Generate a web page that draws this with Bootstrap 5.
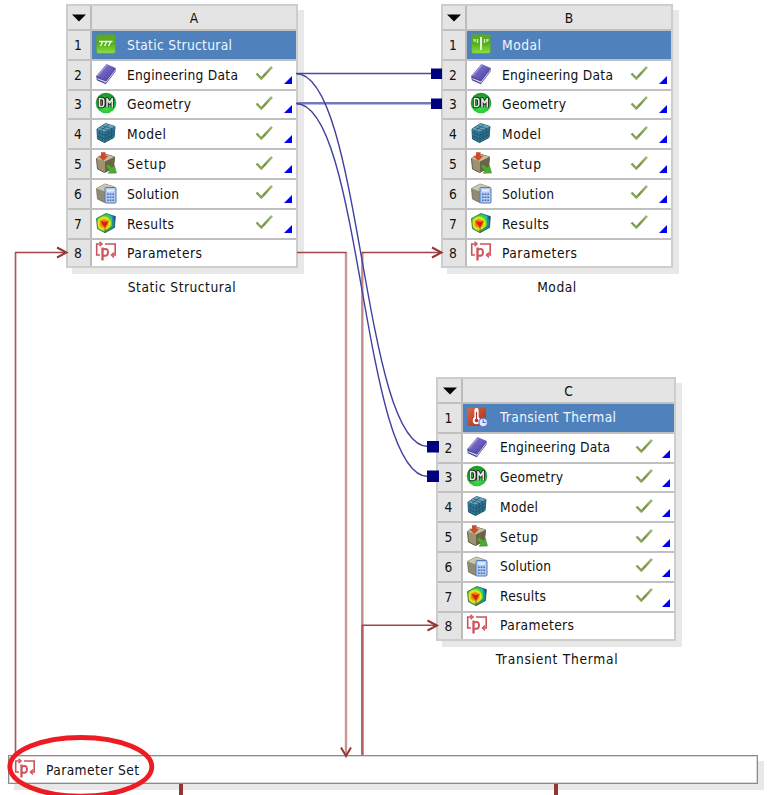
<!DOCTYPE html>
<html lang="en">
<head>
<meta charset="utf-8">
<meta name="viewport" content="width=device-width, initial-scale=1">
<title>Project Schematic</title>
<link href="https://cdn.jsdelivr.net/npm/bootstrap@5.3.0/dist/css/bootstrap.min.css" rel="stylesheet">
<style>
  body { font-family: "DejaVu Sans Condensed", "DejaVu Sans", sans-serif; font-stretch: condensed; font-size: 13.7px; line-height: 16px; color: #111; }
  .schematic { width: 767px; height: 795px; }
  .system { width: 232px; }
  .system-a { left: 66px; top: 4px; }
  .system-b { left: 441px; top: 4px; }
  .system-c { left: 436px; top: 377px; width: 240px; }
  .grid-box { border: 2px solid #cdcdcd; height: 264px; box-shadow: 6px 6px 0 #e8e8e8; background: #fff; }
  .line { height: 29.8px; border-top: 2px solid #c0c0c0; }
  .line.top { height: 23px; border-top: 0; background: #e4e4e4; }
  .line:last-child { height: 28.400px; }
  .num { width: 24px; background: #e4e4e4; border-right: 2px solid #bcbcbc; }
  .system-c .num { width: 25px; }
  .num span { padding-right: 2px; }
  .body-cell { padding-left: 3px; padding-right: 4px; }
  .ico { width: 22px; height: 22px; margin-bottom: 2px; flex: none; }
  .lbl { margin-left: 10px; white-space: nowrap; }
  .system-c .lbl { margin-left: 12px; padding-bottom: 1px; }
  .tick { width: 18px; height: 16px; margin-right: 11px; margin-bottom: 3px; flex: none; }
  .system-c .tick { margin-right: 9px; }
  .tri { width: 8px; height: 8px; margin-bottom: 5px; flex: none; align-self: flex-end; }
  .system-c .tri { margin-bottom: 4px; }
  .titled { background: #4f81bd; color: #f2f6fb; }
  .caption-text { margin-top: 11px; }
  .system-c .caption-text { padding-left: 2px; margin-top: 10px; }
  .param-bar { left: 8px; top: 755px; width: 750px; height: 29px; border: 1px solid #8b8b8b; outline: 1px solid #d9d9d9; outline-offset: -2px; background: #fff; box-shadow: 6px 6px 0 #e8e8e8; padding-left: 5px; }
  .param-bar .lbl { padding-top: 1px; }
</style>
<script src="https://cdn.jsdelivr.net/npm/bootstrap@5.3.0/dist/js/bootstrap.bundle.min.js"></script>
</head>
<body class="bg-white overflow-hidden">
<svg width="0" height="0" class="position-absolute">
  <defs>
    <linearGradient id="gGreen" x1="0" y1="0" x2="0" y2="1"><stop offset="0" stop-color="#5da531"/><stop offset=".5" stop-color="#56b01c"/><stop offset="1" stop-color="#8ee044"/></linearGradient>
    <linearGradient id="gRed" x1="0" y1="0" x2="1" y2="1"><stop offset="0" stop-color="#d9694a"/><stop offset="1" stop-color="#a82b10"/></linearGradient>
    <linearGradient id="gBook" x1="0" y1="0" x2="1" y2="1"><stop offset="0" stop-color="#8f85dc"/><stop offset="1" stop-color="#41389c"/></linearGradient>
    <radialGradient id="gDm" cx=".5" cy=".7" r=".6"><stop offset="0" stop-color="#39e64a"/><stop offset=".65" stop-color="#27bd35"/><stop offset="1" stop-color="#1f9a2d"/></radialGradient>
    <radialGradient id="gRes" gradientUnits="userSpaceOnUse" cx="9" cy="11.500" r="12.500"><stop offset="0" stop-color="#e82810"/><stop offset=".28" stop-color="#f58a10"/><stop offset=".45" stop-color="#f4ea18"/><stop offset=".64" stop-color="#35d435"/><stop offset=".8" stop-color="#20b8d8"/><stop offset="1" stop-color="#1830b0"/></radialGradient>
    <linearGradient id="gTick" x1="0" y1="1" x2="1" y2="0"><stop offset="0" stop-color="#93b267"/><stop offset=".4" stop-color="#76913f"/><stop offset="1" stop-color="#a1be7b"/></linearGradient>
  </defs>
  <symbol id="i-static" viewBox="0 0 22 22"><rect x="1.500" y="1.500" width="19" height="19" rx="2" fill="url(#gGreen)" stroke="#5d9c42" stroke-width=".7"/><path d="M4 8.500h13.500M7.500 9l-2 4M11.500 9l-2 4M15.500 9l-2 4" stroke="#e8f8d8" stroke-width="1.500" fill="none"/></symbol>
  <symbol id="i-modal" viewBox="0 0 22 22"><rect x="1.500" y="1.500" width="19" height="19" rx="2" fill="url(#gGreen)" stroke="#5d9c42" stroke-width=".7"/><path d="M11 4v13" stroke="#f2fbe9" stroke-width="1.800"/><path d="M3 7h2.500M7.500 6v4M14.500 6v4M16.500 7h2.500M5 6v3M17 6v3" stroke="#d8efc5" stroke-width="1.200" fill="none"/></symbol>
  <symbol id="i-thermal" viewBox="0 0 22 22"><rect x="1" y="1.500" width="19" height="18.500" rx="2" fill="url(#gRed)"/><path d="M10.500 4v9" stroke="#fff" stroke-width="4.200" stroke-linecap="round"/><circle cx="10.500" cy="14.500" r="3.700" fill="#fff"/><path d="M10.500 6v8" stroke="#a33" stroke-width="1.200"/><circle cx="10.500" cy="14.500" r="1.800" fill="#a33"/><circle cx="17.200" cy="16.500" r="4.300" fill="#dfe8ff" stroke="#6478c6" stroke-width="1.200"/><path d="M17.200 13.500v3h2.500" fill="none" stroke="#5067bb" stroke-width="1.100"/></symbol>
  <symbol id="i-book" viewBox="0 0 22 22"><path d="M1.200 13l.6 4.200 9 4 9.700-12.700.2-3.500z" fill="#4b448f"/><path d="M2.200 15l8.800 3.600L20.300 6.500v1.300L11 20 2.500 16.300z" fill="#d5d3e6"/><path d="M1.200 13L11.500 1l9.200 4-9.500 12.800z" fill="url(#gBook)"/><path d="M3 12.600L12.300 2" stroke="#b5afed" stroke-width=".9"/></symbol>
  <symbol id="i-dm" viewBox="0 0 22 22"><circle cx="11" cy="11" r="10.300" fill="url(#gDm)"/><g fill="none" stroke-linejoin="round"><path d="M4.500 6.500v8h2q2.300 0 2.300-2.300v-3.400q0-2.300-2.300-2.300zM12 15.500v-9l2.600 4.500 2.700-4.500v9" stroke="#1a261a" stroke-width="3.400"/><path d="M4.500 6.500v8h2q2.300 0 2.300-2.300v-3.400q0-2.300-2.300-2.300zM12 15.500v-9l2.600 4.500 2.700-4.500v9" stroke="#e4e4e4" stroke-width="1.600"/></g></symbol>
  <symbol id="i-model" viewBox="0 0 22 22"><path d="M2 7l8.500-5.500 9.500 3-1 11-9.500 5-7-3.500z" fill="#377c9b" stroke="#245a73" stroke-linejoin="round"/><path d="M2 7l8 2.500 10-5-9.500-3z" fill="#6ba6bd"/><path d="M10 9.500l10-5-1 11-9.500 5z" fill="#2f6f8e"/><path d="M10 9.500v11M4.700 8v9.500M7.300 9v10.500M2.300 10.500l7.600 3 9.800-5M2.400 14l7.300 3 9.700-5M13.300 8v10.500M16.500 6.500v10.500M4.500 5.500l8.500 2.500M7 3.700l9.300 2.800M14 2.500L6 8.200" stroke="#1c5068" stroke-width=".7" fill="none"/></symbol>
  <symbol id="i-setup" viewBox="0 0 22 22"><path d="M1.500 6.500L10 2l9.500 3-1 11-9 4.500-7-3.500z" fill="#9c9273" stroke="#615a43" stroke-linejoin="round"/><path d="M1.500 6.500L10 9.500l9.500-4.500L10 2z" fill="#c7bea1"/><path d="M10 9.500v11l8.500-4.500 1-11z" fill="#6c6348"/><path d="M6 .3h4.500v3.500h3L8.300 9 3 3.800h3z" fill="#cb4c2b"/><path d="M11 14.600l2-2.400 4.200 3.300 2.200-2.300L21.500 21l-8.300.3 1.700-2.700z" fill="#50a934" stroke="#398524" stroke-width=".5"/></symbol>
  <symbol id="i-solution" viewBox="0 0 22 22"><path d="M1.500 6.500L10 2l9.500 3-1 11-9 4.500-7-3.500z" fill="#8f8a72" stroke="#706c57" stroke-width=".8" stroke-linejoin="round"/><path d="M1.500 6.500L10 9.500l9.500-4.500L10 2z" fill="#cac7b0"/><rect x="10" y="5.500" width="11" height="15.500" rx="1" fill="#b4cbef" stroke="#5279bd"/><path d="M12 8.500h7" stroke="#e8f0fc" stroke-width="2"/><path d="M12 12.300h7M12 15.300h7M12 18.200h7" stroke="#4b71b8" stroke-width="1.500" stroke-dasharray="1.700 1"/></symbol>
  <symbol id="i-results" viewBox="0 0 22 22"><path d="M1.500 6.500L11 1.500l9.300 3-.8 11-9.500 5.200-7.500-4z" fill="url(#gRes)" stroke="#27643c" stroke-width=".8" stroke-linejoin="round"/><path d="M20.500 4.200l-.8 11.300-9.700 5.200V18l7-4V6z" fill="#163c9d" opacity=".4"/><path d="M5 8.500l4.800 2 4.200-2-4 7z" fill="#c92515"/><path d="M10 10.500v10" stroke="#7c4b10" stroke-width=".7"/></symbol>
  <symbol id="i-param" viewBox="0 0 22 22"><g fill="none" stroke="#ce5358" stroke-width="1.600"><path d="M5 14H1.700V3H6M10 3h10.200v11H17"/><path d="M4.500.8L7 3 4.500 5.200M19 11.500L16.500 14l2.500 2.500" stroke-width="1.500"/><path d="M7.500 6.500v13" stroke-width="2.300"/><path d="M7.500 8.500q5.500-2 5.500 2.700T7.500 14.500" stroke-width="2"/></g></symbol>
  <symbol id="i-tick" viewBox="0 0 18 16"><path d="M1.500 8.500l4.800 5L17 1.800" fill="none" stroke="url(#gTick)" stroke-width="2.500"/></symbol>
  <symbol id="i-tri" viewBox="0 0 8 8"><path d="M8 0v8H0z" fill="#0000f5"/></symbol>
  <symbol id="i-down" viewBox="0 0 14 8"><path d="M0 .5h14L7 7.500z" fill="#050505"/></symbol>
</svg>

<main class="schematic position-relative overflow-hidden">
  <section class="param-bar position-absolute d-flex align-items-center">
    <svg class="ico"><use href="#i-param"/></svg><span class="lbl" data-w="93">Parameter Set</span>
  </section>

  <div id="systems"></div>

  <!-- links between systems -->
  <svg class="position-absolute top-0 start-0" width="767" height="795" fill="none">
    <path d="M15.500 755V252.500" stroke="#ab5d5d" stroke-width="1.700"/>
    <path d="M346 252V754" stroke="#cb9696" stroke-width="2.400"/>
    <path d="M362.300 755V252" stroke="#c48a8a" stroke-width="2.400"/>
    <path d="M362.300 755V625" stroke="#b26363" stroke-width="2.400"/>
    <path d="M15 252.500H66M297 252.500H346.500M362 252.500H441M362 625.300H437" stroke="#a04545" stroke-width="1.400"/>
    <path d="M297 73.500H432" stroke="#4949a4" stroke-width="1.700"/>
    <path d="M297 103.300H432" stroke="#7676bd" stroke-width="2.500"/>
    <g stroke="#4040a0" stroke-width="1.400">
      <path d="M296 73.500C362 73.500 362 446.500 428 446.500"/>
      <path d="M296 103.500C362 103.500 362 476.500 428 476.500"/>
    </g>
    <path d="M181 784V795M556 784V795" stroke="#963535" stroke-width="4"/>
    <path d="M431 68.500h11v10.500h-11zM431 98.500h11v10.500h-11zM427 441h12v11.500h-12zM427 470.500h12v11.500h-12z" fill="#00007c"/>
    <path d="M57 247.500l9.500 5-9.500 5M432 247.500l9.500 5-9.500 5M427.500 620.500l9.500 5-9.500 5M341 747.500l5 8.500 5-8.500" stroke="#963535" stroke-width="2"/>
    <ellipse cx="80.800" cy="766.800" rx="71" ry="29.300" stroke="#ed1c24" stroke-width="4.800"/>
  </svg>
</main>

<script>
  const cells = [["book","Engineering Data",111],["dm","Geometry",64],["model","Model",39],["setup","Setup",39],["solution","Solution",52],["results","Results",47],["param","Parameters",75]];
  const systems = [
    {id:"a", title:"Static Structural", icon:"static", w:105, cw:108},
    {id:"b", title:"Modal", icon:"modal", w:39, cw:39},
    {id:"c", title:"Transient Thermal", icon:"thermal", w:116, cw:122}
  ];
  document.getElementById("systems").innerHTML = systems.map(s => {
    const rows = [[s.icon, s.title, s.w], ...cells].map(([icon, text, w], i) => `
      <div class="line d-flex">
        <div class="num d-flex align-items-center justify-content-center flex-shrink-0"><span>${i + 1}</span></div>
        <div class="body-cell d-flex align-items-center flex-grow-1 ${i ? "" : "titled"}">
          <svg class="ico"><use href="#i-${icon}"/></svg>
          <span class="lbl me-auto" data-w="${s.id === "c" && i ? w - 1 : w}">${text}</span>
          ${i > 0 && i < 7 ? '<svg class="tick"><use href="#i-tick"/></svg><svg class="tri"><use href="#i-tri"/></svg>' : ""}
        </div>
      </div>`).join("");
    return `<section class="system system-${s.id} position-absolute">
      <div class="grid-box">
        <div class="line top d-flex">
          <div class="num d-flex align-items-center justify-content-center flex-shrink-0"><svg width="14" height="8"><use href="#i-down"/></svg></div>
          <div class="flex-grow-1 d-flex align-items-center justify-content-center">${s.id.toUpperCase()}</div>
        </div>${rows}
      </div>
      <div class="caption-text text-center"><span data-w="${s.cw}">${s.title}</span></div>
    </section>`;
  }).join("");
  document.querySelectorAll("[data-w]").forEach(el => {
    const gap = (el.dataset.w - el.getBoundingClientRect().width) / (el.textContent.length - 1);
    el.style.letterSpacing = gap.toFixed(3) + "px";
  });
</script>
</body>
</html>
